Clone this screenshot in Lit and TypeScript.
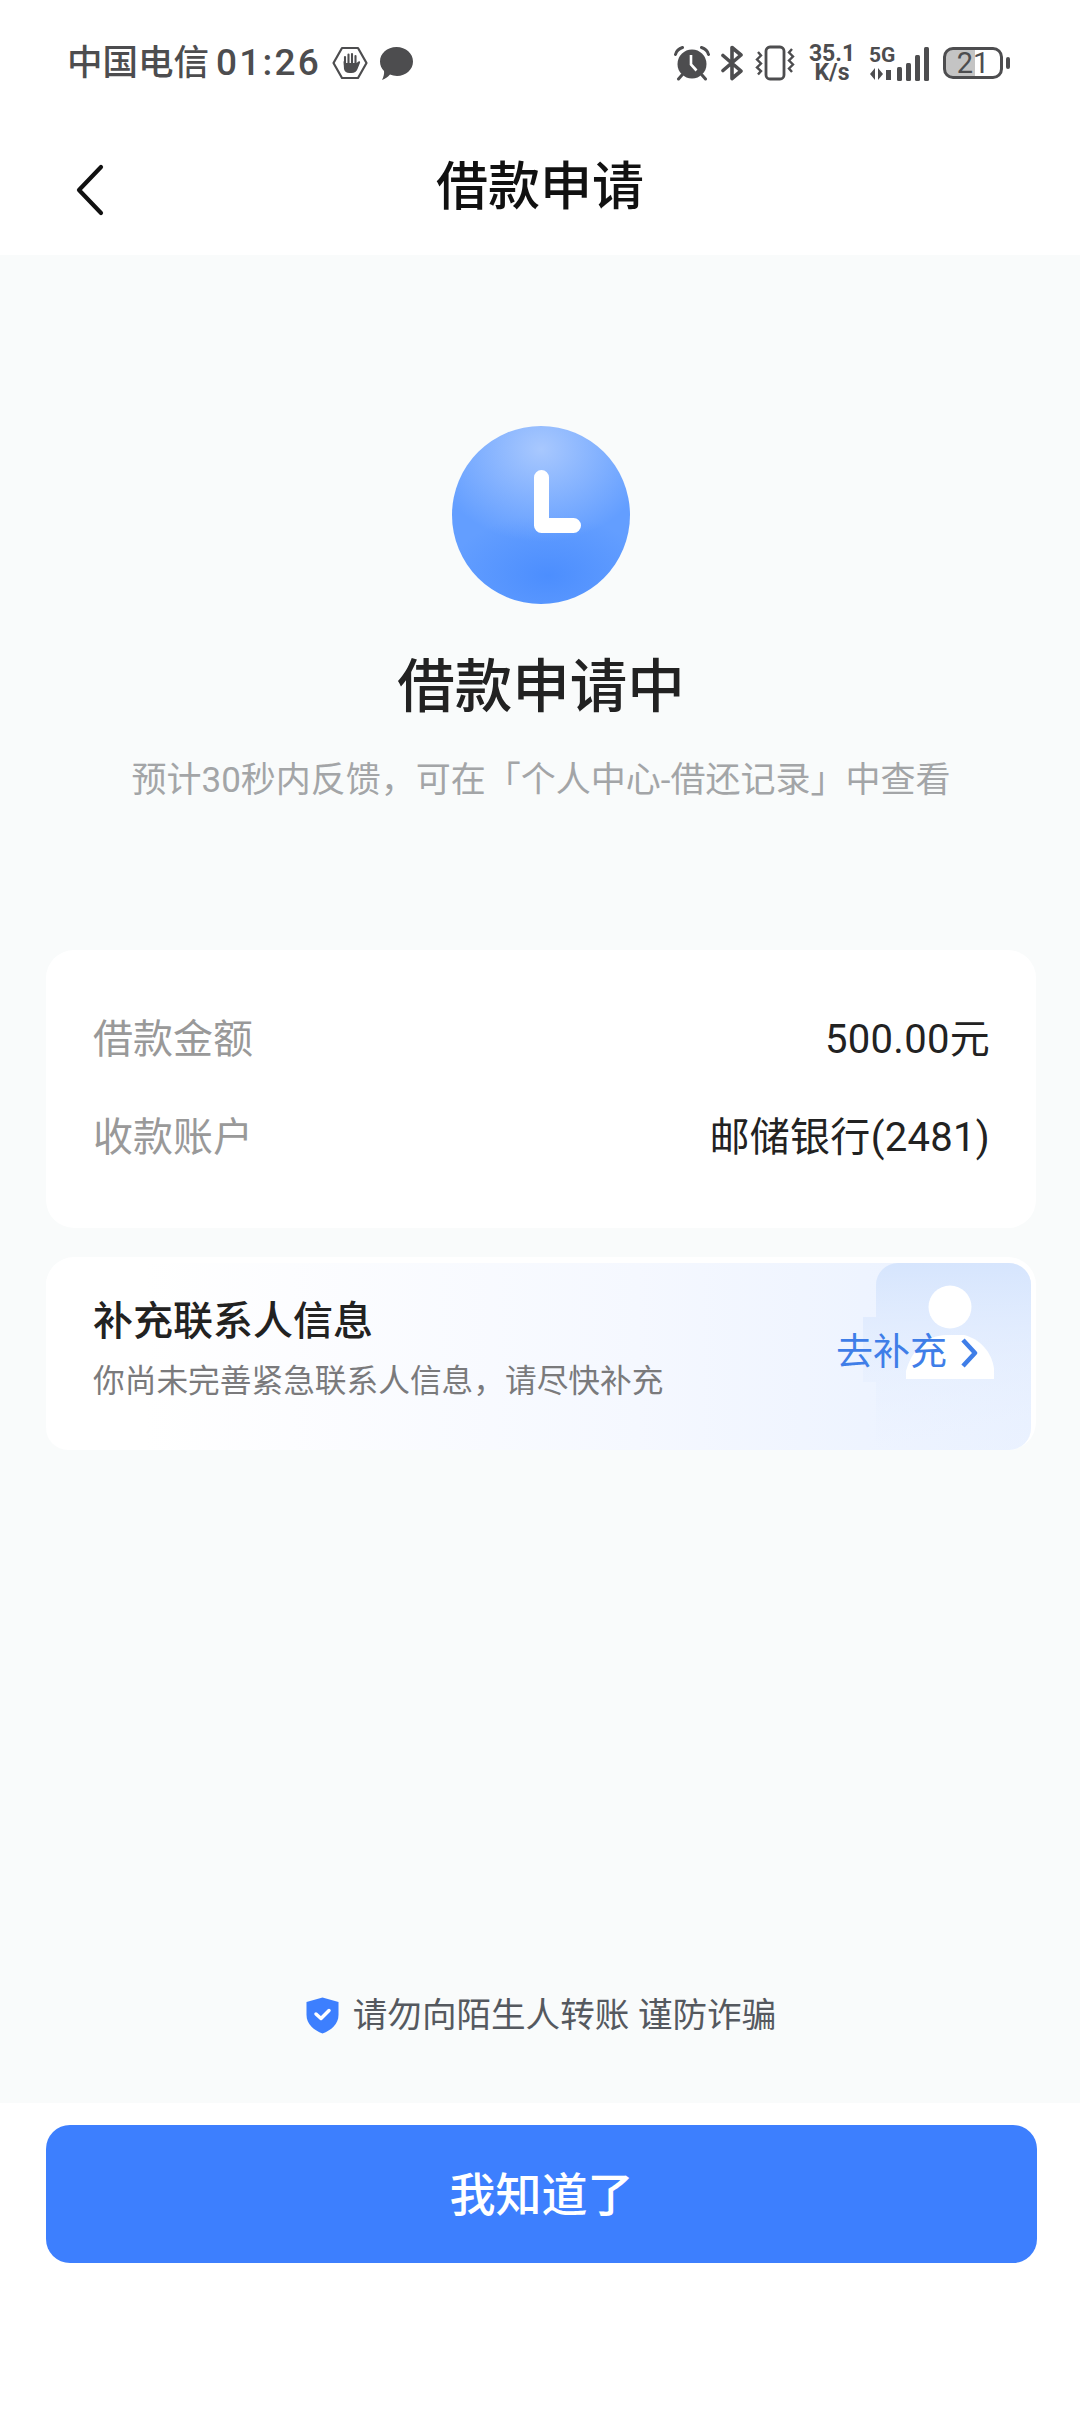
import { LitElement, html, css } from 'lit';
import { customElement } from 'lit/decorators.js';

@customElement('app-root')
export class AppRoot extends LitElement {
  static styles = css`
    :host {
      display: block;
      width: 1080px;
      height: 2412px;
      background: #ffffff;
      font-family: Roboto, 'Noto Sans CJK SC', sans-serif;
      color: #222222;
    }

    .status-bar {
      height: 90px;
      box-sizing: border-box;
      padding: 40px 70px 0 67px;
      display: flex;
      align-items: flex-start;
      color: #4d4d4f;
    }

    .status-left {
      display: flex;
      align-items: center;
      height: 46px;
    }

    .carrier {
      font-size: 35.5px;
      font-weight: 500;
      line-height: 46px;
    }

    .clock {
      font-size: 37px;
      font-weight: 500;
      line-height: 46px;
      margin-left: 7px;
      letter-spacing: 2.2px;
    }

    .hex {
      margin-left: 11px;
    }

    .bubble {
      margin-left: 11px;
    }

    .status-right {
      margin-left: auto;
      display: flex;
      align-items: center;
      height: 46px;
    }

    .speed {
      margin-left: 14px;
      width: 46px;
      display: flex;
      flex-direction: column;
      align-items: center;
      font-size: 23px;
      font-weight: 700;
      line-height: 19px;
      white-space: nowrap;
    }

    .signal {
      margin-left: 14px;
      width: 60px;
      display: flex;
      align-items: center;
      gap: 1px;
    }

    .signal-left {
      width: 27px;
      display: flex;
      flex-direction: column;
      gap: 2px;
      font-size: 21px;
      font-weight: 700;
      line-height: 19px;
    }

    .signal-left svg,
    .signal > svg {
      display: block;
    }

    .battery {
      margin-left: 14px;
      width: 60px;
      height: 32px;
      box-sizing: border-box;
      border: 3.5px solid #4d4d4f;
      border-radius: 10px;
      background: linear-gradient(90deg, #c4c4c4 0 53%, transparent 53%);
      display: flex;
      align-items: center;
      justify-content: center;
      font-size: 29px;
      line-height: 24px;
      font-weight: 400;
    }

    .battery-nub {
      margin-left: 3px;
      width: 4px;
      height: 12px;
      border-radius: 2px;
      background: #4d4d4f;
    }

    .nav {
      height: 165px;
      box-sizing: border-box;
      padding-top: 31px;
      display: flex;
      align-items: center;
      justify-content: center;
      position: relative;
    }

    .back {
      position: absolute;
      left: 75px;
      top: 74px;
      display: block;
    }

    .nav-title {
      font-size: 52px;
      font-weight: 500;
      line-height: 70px;
      color: #111111;
    }

    .main {
      height: 1848px;
      box-sizing: border-box;
      background: #f9fbfb;
      padding: 171px 44px 63px 46px;
      display: flex;
      flex-direction: column;
      align-items: center;
    }

    .status-ball {
      width: 178px;
      height: 178px;
      border-radius: 50%;
      background: radial-gradient(
          ellipse 62% 52% at 50% 13%,
          #a8c8fe 0,
          rgba(168, 200, 254, 0) 100%
        ),
        radial-gradient(
          ellipse 56% 34% at 54% 84%,
          #4c8efe 0,
          rgba(76, 142, 254, 0) 100%
        ),
        #639eff;
      flex: none;
    }

    .status-ball svg {
      display: block;
    }

    .heading {
      margin-top: 49px;
      font-size: 57.5px;
      font-weight: 500;
      line-height: 70px;
      color: #222222;
    }

    .hint {
      margin-top: 33px;
      font-size: 35px;
      line-height: 50px;
      color: #a3a5a7;
      white-space: nowrap;
    }

    .info-card {
      margin-top: 144px;
      width: 100%;
      height: 278px;
      box-sizing: border-box;
      padding: 60px 46px 0 47px;
      background: #ffffff;
      border-radius: 28px;
      display: flex;
      flex-direction: column;
      gap: 38px;
    }

    .row {
      display: flex;
      justify-content: space-between;
      line-height: 60px;
      font-size: 40px;
    }

    .row-label {
      color: #999999;
    }

    .row-value {
      color: #222222;
      letter-spacing: 0.3px;
    }

    .contact-card {
      margin-top: 29px;
      width: 100%;
      height: 193px;
      box-sizing: border-box;
      padding: 35px 48px 0 47px;
      background: #ffffff;
      border-radius: 28px;
      position: relative;
      display: flex;
      justify-content: space-between;
    }

    .contact-bg {
      position: absolute;
      left: 0;
      top: 0;
      display: block;
    }

    .contact-text {
      position: relative;
    }

    .contact-title {
      font-size: 40px;
      font-weight: 500;
      line-height: 60px;
      color: #222222;
    }

    .contact-sub {
      font-size: 31.7px;
      line-height: 50px;
      margin-top: 5px;
      color: #7a7a7c;
      white-space: nowrap;
    }

    .contact-link {
      position: relative;
      margin-top: 36px;
      margin-right: 10px;
      height: 50px;
      display: flex;
      align-items: center;
      font-size: 37px;
      line-height: 50px;
      color: #3f7ee8;
    }

    .contact-link svg {
      margin-left: 13px;
    }

    .warning {
      margin-top: auto;
      display: flex;
      align-items: center;
      font-size: 34.6px;
      line-height: 50px;
      color: #55595f;
      white-space: nowrap;
    }

    .warning svg {
      margin-right: 14px;
    }

    .footer {
      padding: 22px 43px 0 46px;
    }

    .confirm {
      display: flex;
      align-items: center;
      justify-content: center;
      width: 100%;
      height: 138px;
      box-sizing: border-box;
      padding: 0 0 6px;
      border: none;
      border-radius: 24px;
      background: #3d7ffe;
      color: #ffffff;
      font-family: inherit;
      font-size: 46px;
      font-weight: 500;
    }
  `;

  private renderStatusBar() {
    return html`
      <div class="status-bar">
        <div class="status-left">
          <span class="carrier">中国电信</span>
          <span class="clock">01:26</span>
          <svg class="hex" width="36" height="34" viewBox="0 0 36 34">
            <path d="M10 2H26L34.5 17L26 32H10L1.5 17Z" fill="none" stroke="#4d4d4f" stroke-width="2.2" stroke-linejoin="round" />
            <path d="M13 11V19M16.500 8.500V18M20 8V18M23.500 10V19" fill="none" stroke="#4d4d4f" stroke-width="2.100" stroke-linecap="round" />
            <path d="M11.500 15.500C12.500 14.500 14 15 14 16V17H24.500L26.500 15.500C27.500 15 28.500 15.800 28 16.800L25.500 23C24.500 25.500 22.500 27 19.500 27H17.500C14.500 27 12.500 25.500 12 23Z" fill="#4d4d4f" />
          </svg>
          <svg class="bubble" width="35" height="35" viewBox="0 0 35 35">
            <path d="M17.5 1C27 1 34 7.500 34 15.500C34 23.500 27 30 18 30C15.500 30 13 29.500 11 28.600C9 31 6 33 3 34C4.500 31 5.500 27.500 5 25C2.500 22.500 1 19.200 1 15.500C1 7.500 8 1 17.5 1Z" fill="#4d4d4f" />
          </svg>
        </div>
        <div class="status-right">
          <svg width="36" height="36" viewBox="0 0 36 36">
            <circle cx="18" cy="19" r="14.500" fill="#4d4d4f" />
            <path d="M1.500 9.500C2.500 5.500 5 3.500 8.500 2.500M34.500 9.500C33.500 5.500 31 3.500 27.500 2.500" fill="none" stroke="#4d4d4f" stroke-width="3" stroke-linecap="round" />
            <path d="M8 30L4.500 34M28 30L31.500 34" stroke="#4d4d4f" stroke-width="3" stroke-linecap="round" />
            <path d="M17 10V19.500L22.500 25.500" fill="none" stroke="#ffffff" stroke-width="2.600" />
          </svg>
          <svg style="margin-left:11px" width="23" height="36" viewBox="0 0 23 36">
            <path d="M2 10.500L20 26L11 33.500V2.500L20 10L2 25.500" fill="none" stroke="#4d4d4f" stroke-width="3.600" stroke-linejoin="round" stroke-linecap="round" />
          </svg>
          <svg style="margin-left:11px" width="40" height="36" viewBox="0 0 40 36">
            <rect x="11" y="2" width="18" height="32" rx="4" fill="none" stroke="#4d4d4f" stroke-width="2.800" />
            <path d="M3 7L6 10.500L2 14.500L6 18.500L2 22.500L6 26L3 29.500M37 4L34 7.500L38 11.500L34 15.500L38 19.500L34 23.500L37 27" fill="none" stroke="#4d4d4f" stroke-width="2.400" />
          </svg>
          <div class="speed"><span>35.1</span><span>K/s</span></div>
          <div class="signal">
            <div class="signal-left">
              <span>5G</span>
              <svg width="26" height="14" viewBox="0 0 26 14">
                <path d="M6 1L1 7L6 13ZM9 1L14 7L9 13ZM17 3H22V13H17Z" fill="#4d4d4f" />
              </svg>
            </div>
            <svg width="32" height="36" viewBox="0 0 32 36">
              <rect x="0" y="22" width="5" height="14" rx="1.500" fill="#4d4d4f" />
              <rect x="9" y="18" width="5" height="18" rx="1.500" fill="#4d4d4f" />
              <rect x="18" y="10" width="5" height="26" rx="1.500" fill="#4d4d4f" />
              <rect x="27" y="2" width="5" height="34" rx="1.500" fill="#4d4d4f" />
            </svg>
          </div>
          <div class="battery">21</div>
          <div class="battery-nub"></div>
        </div>
      </div>
    `;
  }

  render() {
    return html`
      ${this.renderStatusBar()}
      <div class="nav">
        <svg class="back" width="32" height="52" viewBox="0 0 32 52">
          <path d="M26 3L4 26L26 49" fill="none" stroke="#111111" stroke-width="4.200" stroke-linecap="round" stroke-linejoin="round" />
        </svg>
        <div class="nav-title">借款申请</div>
      </div>
      <div class="main">
        <div class="status-ball">
          <svg width="178" height="178" viewBox="0 0 178 178">
            <path d="M89.500 51.500V99.500H121.500" fill="none" stroke="#ffffff" stroke-width="15" stroke-linecap="round" stroke-linejoin="round" />
          </svg>
        </div>
        <div class="heading">借款申请中</div>
        <div class="hint">预计30秒内反馈，可在「个人中心-借还记录」中查看</div>
        <div class="info-card">
          <div class="row">
            <span class="row-label">借款金额</span>
            <span class="row-value">500.00元</span>
          </div>
          <div class="row">
            <span class="row-label">收款账户</span>
            <span class="row-value">邮储银行(2481)</span>
          </div>
        </div>
        <div class="contact-card">
          <svg class="contact-bg" width="990" height="193" viewBox="0 0 990 193">
            <defs>
              <linearGradient id="wash" x1="0" y1="0" x2="1" y2="0">
                <stop offset="0.1" stop-color="#ffffff" />
                <stop offset="0.6" stop-color="#f5f8ff" />
                <stop offset="1" stop-color="#e9f1ff" />
              </linearGradient>
              <linearGradient id="panel" x1="0" y1="0" x2="0" y2="1">
                <stop offset="0" stop-color="#d6e5fd" />
                <stop offset="1" stop-color="#edf3ff" stop-opacity="0.2" />
              </linearGradient>
            </defs>
            <path d="M0 28A22 22 0 0 1 22 6H963A22 22 0 0 1 985 28V171A22 22 0 0 1 963 193H22A22 22 0 0 1 0 171Z" fill="url(#wash)" />
            <path d="M830 28A22 22 0 0 1 852 6H963A22 22 0 0 1 985 28V171A22 22 0 0 1 963 193H830V125H817V60H830Z" fill="url(#panel)" />
            <circle cx="904" cy="50" r="21.500" fill="#ffffff" />
            <path d="M860 122V114C866 92 882 78 900 78H918C934 82 946 95 948 112V122Z" fill="#ffffff" />
          </svg>
          <div class="contact-text">
            <div class="contact-title">补充联系人信息</div>
            <div class="contact-sub">你尚未完善紧急联系人信息，请尽快补充</div>
          </div>
          <div class="contact-link">
            去补充
            <svg width="18" height="32" viewBox="0 0 18 32">
              <path d="M3 3L15 16L3 29" fill="none" stroke="#3f7ee8" stroke-width="4.500" stroke-linejoin="round" />
            </svg>
          </div>
        </div>
        <div class="warning">
          <svg width="33" height="37" viewBox="0 0 33 37">
            <path d="M16.500 0.500L32.500 5V18C32.500 27 25 33.500 16.500 36.500C8 33.500 0.500 27 0.500 18V5Z" fill="#3d7ffe" />
            <path d="M10 17L15 21.500L23 13.500" fill="none" stroke="#ffffff" stroke-width="3.500" stroke-linecap="round" stroke-linejoin="round" />
          </svg>
          <span>请勿向陌生人转账 谨防诈骗</span>
        </div>
      </div>
      <div class="footer">
        <button class="confirm">我知道了</button>
      </div>
    `;
  }
}
